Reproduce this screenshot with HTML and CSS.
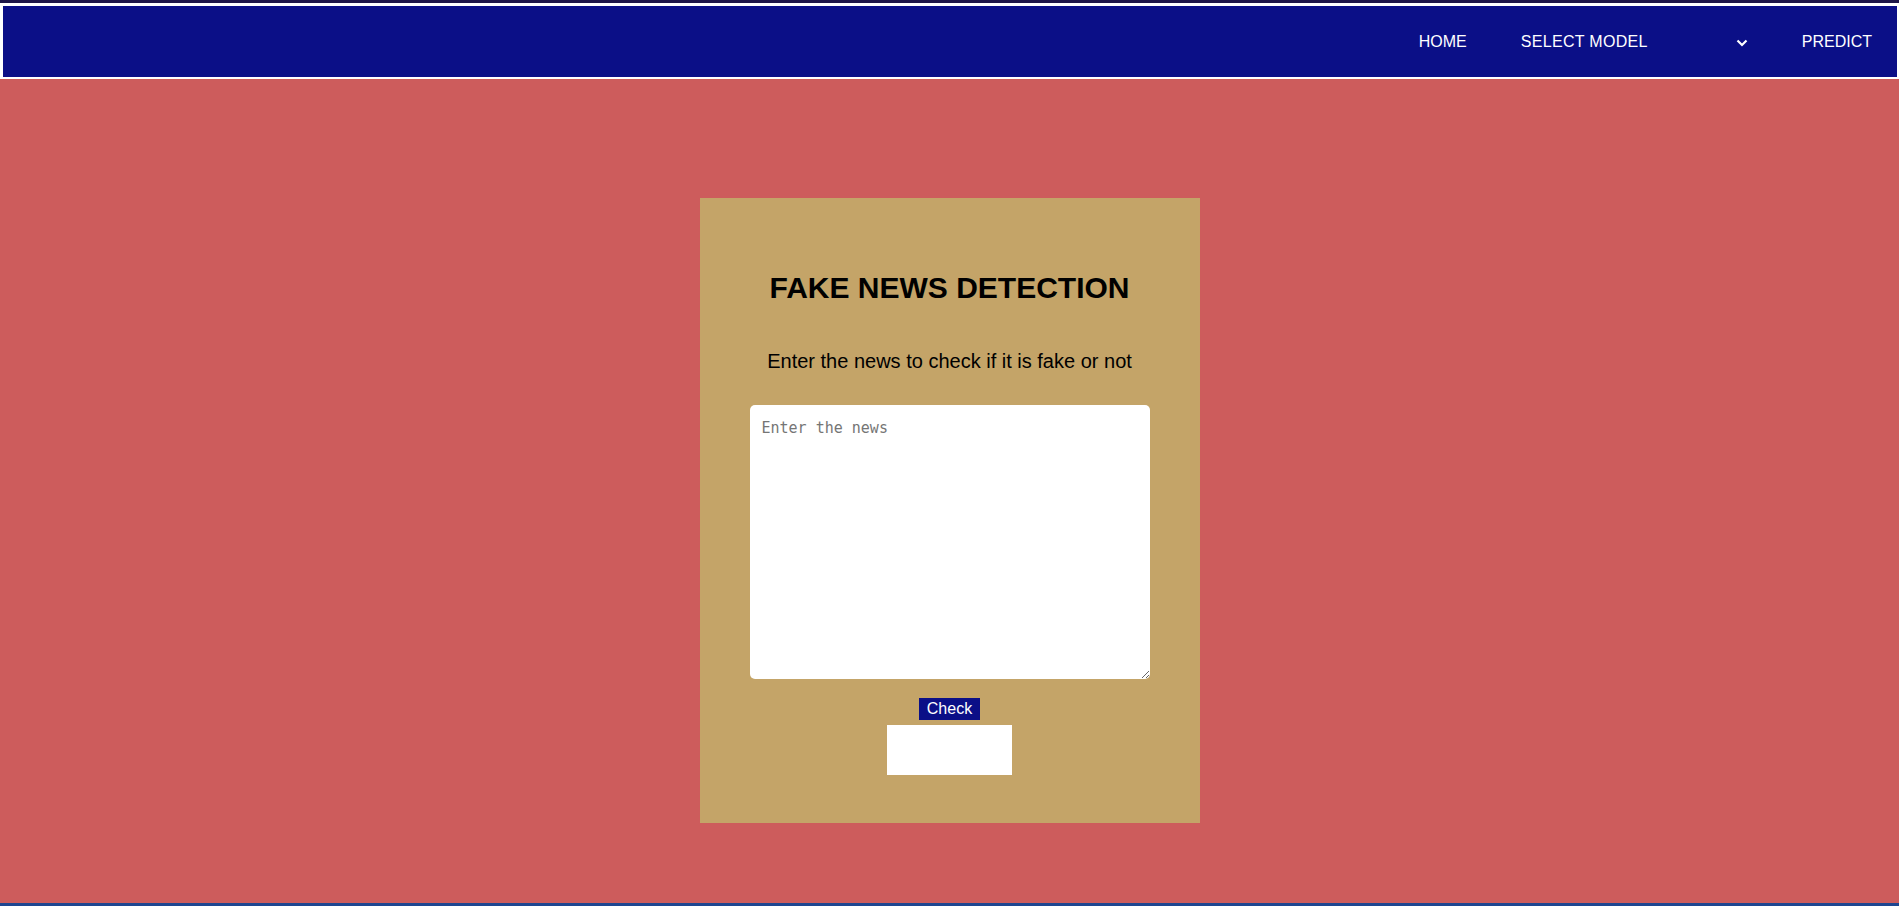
FILE: index.html
```html
<!DOCTYPE html>
<html lang="en">
<head>
<meta charset="utf-8">
<title>Fake News Detection</title>
<link rel="stylesheet" href="styles.css">
</head>
<body>
<div class="topstrip"></div>
<nav class="nav">
  <a class="nav-link" href="#">HOME</a>
  <div class="nav-select">
    <span>SELECT MODEL</span>
    <svg class="chev" width="12" height="8" viewBox="0 0 12 8"><polyline points="1.5,1.5 6,6 10.5,1.5" fill="none" stroke="#ffffff" stroke-width="2.2"/></svg>
  </div>
  <a class="nav-link" href="#">PREDICT</a>
</nav>
<main class="main">
  <section class="card">
    <h1 class="title">FAKE NEWS DETECTION</h1>
    <p class="subtitle">Enter the news to check if it is fake or not</p>
    <textarea class="news" placeholder="Enter the news"></textarea>
    <button class="check">Check</button>
    <div class="result"></div>
  </section>
</main>
<div class="bottomstrip"></div>
</body>
</html>
```
FILE: styles.css
```css
html, body {
  margin: 0;
  padding: 0;
}
body {
  height: 100vh;
  display: flex;
  flex-direction: column;
  font-family: "Liberation Sans", Arial, sans-serif;
  background: #cd5c5c;
  overflow: hidden;
}
.topstrip {
  height: 3px;
  background: #1d1548;
  flex: none;
}
.nav {
  flex: none;
  height: 71px;
  background: #0b0f87;
  border-style: solid;
  border-color: #ffffff;
  border-width: 3px 2px 2px 3px;
  display: flex;
  justify-content: flex-end;
  align-items: center;
  gap: 54px;
  padding-right: 25px;
}
.nav-link {
  color: #ffffff;
  text-decoration: none;
  font-size: 16px;
  line-height: 18px;
}
.nav-select {
  width: 227px;
  display: flex;
  justify-content: space-between;
  align-items: center;
  color: #ffffff;
  font-size: 16px;
  line-height: 18px;
  letter-spacing: 0.3px;
}
.chev {
  display: block;
  margin-top: 2px;
}
.main {
  flex: 1;
  background: #cd5c5c;
  display: flex;
  justify-content: center;
  align-items: flex-start;
  padding-top: 119px;
}
.card {
  width: 500px;
  height: 625px;
  box-sizing: border-box;
  background: #c4a468;
  display: flex;
  flex-direction: column;
  align-items: center;
  padding-top: 72px;
}
.title {
  margin: 0;
  font-size: 30px;
  line-height: 36px;
  font-weight: bold;
  color: #000000;
}
.subtitle {
  margin: 43px 0 0;
  font-size: 20px;
  line-height: 24px;
  color: #000000;
}
.news {
  margin-top: 32px;
  width: 400px;
  height: 274px;
  box-sizing: border-box;
  border: none;
  border-radius: 5px;
  padding: 14px 12px;
  font-family: "DejaVu Sans Mono", "Liberation Mono", monospace;
  font-size: 15px;
  line-height: 18px;
  background: #ffffff;
  outline: none;
  display: block;
}
.news::placeholder {
  color: #757575;
}
.check {
  margin-top: 19px;
  height: 22px;
  padding: 0 8px;
  border: none;
  background: #0b0f87;
  color: #ffffff;
  font-family: "Liberation Sans", Arial, sans-serif;
  font-size: 16px;
  line-height: 22px;
  border-radius: 0;
}
.result {
  margin-top: 5px;
  width: 125px;
  height: 50px;
  background: #ffffff;
}
.bottomstrip {
  height: 3px;
  background: #1e4690;
  flex: none;
}
```
